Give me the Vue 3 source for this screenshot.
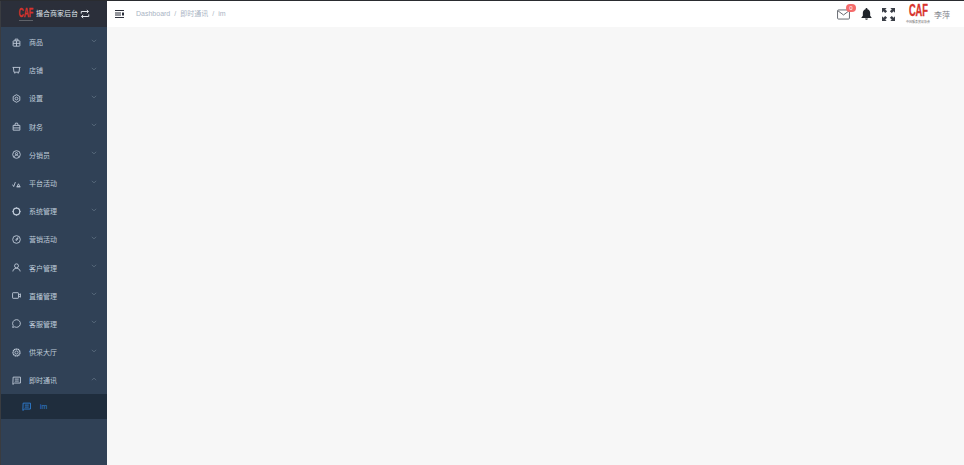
<template>
  <div class="layout">
    <aside class="sidebar">
      <div class="logo-bar">
        <div class="logo-mark">
          <span class="caf">CAF</span>
          <span class="tiny"></span>
        </div>
        <span class="logo-title">撮合商家后台</span>
        <svg class="swap" viewBox="0 0 12 12"><path d="M1.500 5.500V3h8.500M8.200 1.200L10.200 3 8.200 4.800M10.500 6.500V9H2M3.800 7.200L1.800 9l2 1.800" /></svg>
      </div>
      <nav class="menu">
        <div v-for="item in menu" :key="item.name" class="menu-item">
          <svg class="icon" viewBox="0 0 16 16" v-html="icons[item.icon]"></svg>
          <span class="label">{{ item.name }}</span>
          <svg class="arrow" :class="{ up: item.open }" viewBox="0 0 8 5"><path d="M1 1l3 2.600L7 1" /></svg>
        </div>
        <div class="sub-item">
          <svg class="icon" viewBox="0 0 16 16" v-html="icons.chat"></svg>
          <span>im</span>
        </div>
      </nav>
    </aside>
    <main class="main">
      <header class="topbar">
        <svg class="fold" viewBox="0 0 9 8"><path d="M0 .5h9M0 3h6M0 5h6M0 7.500h9" /><path class="solid" d="M7 2.500h2v3H7z" /></svg>
        <div class="crumbs">
          <span>Dashboard</span><i>/</i><span>即时通讯</span><i>/</i><span>im</span>
        </div>
        <div class="tools">
          <div class="mail">
            <svg viewBox="0 0 14 11"><rect x=".6" y=".6" width="12.800" height="9.800" rx="1" /><path d="M1 1.500l6 4.500 6-4.500" /></svg>
            <span class="badge">0</span>
          </div>
          <svg class="bell" viewBox="0 0 12 13"><path d="M6 0a1 1 0 0 1 1 1.200C9 1.700 10 3.400 10 5.500V8.500l1.800 2.300H.2L2 8.500V5.500c0-2.100 1-3.800 3-4.300A1 1 0 0 1 6 0zM4.500 11.300h3a1.500 1.500 0 0 1-3 0z" /></svg>
          <svg class="full" viewBox="0 0 14 14"><path d="M0 0h5L3.500 1.500 5.500 3.500 3.500 5.500 1.500 3.500 0 5zM14 0v5L12.500 3.500 10.500 5.500 8.500 3.500 10.500 1.500 9 0zM0 14V9L1.500 10.500 3.500 8.500 5.500 10.500 3.500 12.500 5 14zM14 14H9L10.500 12.500 8.500 10.500 10.500 8.500 12.500 10.500 14 9z" /></svg>
          <div class="avatar">
            <span class="caf big">CAF</span>
            <span class="tiny wide">中国服务贸易协会</span>
          </div>
          <span class="user">李萍</span>
        </div>
      </header>
      <div class="content"></div>
    </main>
  </div>
</template>

<script setup>
const icons = {
  goods: '<rect x="2" y="5" width="12" height="9.500" rx="1"/><path d="M5.500 5V2h5v3M2 9.500h12M8 5v9.500"/>',
  shop: '<path d="M1 2.500h14M2.500 2.500l1 8.500h9l1-8.500M5 11v2.500M11 11v2.500"/>',
  gear: '<circle cx="8" cy="8" r="2.500"/><path d="M8 1.200l5.900 3.400v6.800L8 14.800l-5.900-3.400V4.600z"/>',
  money: '<path d="M2 6h12v8.500H2zM5 6l1.200-4h3.600L11 6M2 10.500h12"/>',
  globe: '<circle cx="8" cy="8" r="6.800"/><circle cx="8" cy="6.500" r="2"/><path d="M3.500 12.500c1-2.300 2.500-3.500 4.500-3.500s3.500 1.200 4.500 3.500"/>',
  chart: '<path d="M1 10l2 3.500 3-8M9 13.500l2.500-5 2.500 5zM8 14h7"/>',
  sys: '<circle cx="8" cy="8" r="5.800" stroke-width="2.200"/><path d="M8 .5v2M8 13.500v2M.5 8h2M13.500 8h2"/>',
  compass: '<circle cx="8" cy="8" r="6.800"/><path d="M10.800 4.800L9 9 7 9.500 7 7.500z"/>',
  user: '<circle cx="8" cy="5" r="3.500"/><path d="M1.500 15c.5-3.800 3-5.500 6.500-5.500s6 1.700 6.500 5.500"/>',
  video: '<rect x="1" y="3" width="10.500" height="10" rx="1"/><path d="M11.500 7l3.500-2v6l-3.500-2"/>',
  bubble: '<path d="M8 1.200a6.800 6.800 0 1 1-3.300 12.700L1.200 15l.9-3.400A6.800 6.800 0 0 1 8 1.200z"/>',
  supply: '<circle cx="8" cy="8" r="2.800"/><circle cx="8" cy="8" r="6.200" stroke-width="2.200" stroke-dasharray="2.800 .6"/>',
  chat: '<path d="M2 2h13v10.500H4.500L1.500 15zM5 5.500h7M5 9h7"/>',
}

const menu = [
  { name: '商品', icon: 'goods' },
  { name: '店铺', icon: 'shop' },
  { name: '设置', icon: 'gear' },
  { name: '财务', icon: 'money' },
  { name: '分销员', icon: 'globe' },
  { name: '平台活动', icon: 'chart' },
  { name: '系统管理', icon: 'sys' },
  { name: '营销活动', icon: 'compass' },
  { name: '客户管理', icon: 'user' },
  { name: '直播管理', icon: 'video' },
  { name: '客服管理', icon: 'bubble' },
  { name: '供采大厅', icon: 'supply' },
  { name: '即时通讯', icon: 'chat', open: true },
]
</script>

<style>
body {
  margin: 0;
}
</style>

<style scoped>
.layout {
  display: flex;
  width: 964px;
  height: 465px;
  overflow: hidden;
  font-family: "Liberation Sans", "Noto Sans CJK SC", sans-serif;
  border-top: 1px solid #2a2c30;
  box-sizing: border-box;
  background: #f7f7f7;
}

.sidebar {
  width: 107px;
  flex: none;
  background: #304156;
  border-left: 1px solid #3a3c40;
  box-sizing: border-box;
}

.logo-bar {
  height: 26px;
  background: #2b2f3a;
  display: flex;
  align-items: center;
  padding-left: 17px;
}

.logo-mark {
  width: 15px;
  flex: none;
  display: flex;
  flex-direction: column;
  align-items: center;
}

.caf {
  font-weight: 700;
  font-size: 12.500px;
  line-height: 12px;
  color: #d8332c;
  -webkit-text-stroke: .3px #d8332c;
  transform: scaleX(.58);
}

.tiny {
  display: block;
  height: 1.500px;
  width: 14px;
  margin-top: 1px;
  background: #5f6269;
}

.logo-title {
  font-size: 7px;
  line-height: 10px;
  color: #dfe4ea;
  margin-left: 3px;
  white-space: nowrap;
}

.swap {
  width: 10px;
  height: 10px;
  margin-left: 2px;
  fill: none;
  stroke: #e4e7ec;
  stroke-width: 1.200;
}

.menu {
  padding-top: 1px;
}

.menu-item {
  height: 28.200px;
  display: flex;
  align-items: center;
  padding-left: 11px;
  color: #bfcbd9;
  font-size: 7px;
}

.icon {
  width: 9px;
  height: 9px;
  flex: none;
  fill: none;
  stroke: currentColor;
  stroke-width: 1.600;
}

.label {
  margin-left: 8px;
  flex: 1;
}

.arrow {
  width: 6px;
  height: 4px;
  margin: 0 10px 3px 0;
  fill: none;
  stroke: #6d7d90;
  stroke-width: .8;
}

.arrow.up {
  transform: scaleY(-1);
}

.sub-item {
  height: 25px;
  display: flex;
  align-items: center;
  gap: 9px;
  padding-left: 21px;
  background: #1f2d3d;
  color: #2f7fd6;
  font-size: 7px;
}

.main {
  flex: 1;
  display: flex;
  flex-direction: column;
}

.topbar {
  height: 26px;
  background: #fff;
  display: flex;
  align-items: center;
  box-shadow: 0 1px 2px rgba(0, 21, 41, .06);
}

.fold {
  width: 9px;
  height: 8px;
  margin-left: 8px;
  fill: none;
  stroke: #2b2f3a;
  stroke-width: 1;
}

.fold .solid {
  fill: #2b2f3a;
  stroke: none;
}

.crumbs {
  margin-left: 12px;
  font-size: 7px;
  line-height: 10px;
  color: #a9b4c4;
  display: flex;
  align-items: center;
  gap: 4px;
}

.crumbs i {
  font-style: normal;
}

.tools {
  margin-left: auto;
  display: flex;
  align-items: center;
  padding-right: 14px;
}

.mail {
  position: relative;
  width: 13px;
  height: 11px;
}

.mail svg {
  display: block;
  width: 13px;
  height: 11px;
  fill: none;
  stroke: #5c6068;
  stroke-width: 1;
}

.badge {
  position: absolute;
  top: -5px;
  right: -6px;
  width: 10px;
  height: 8px;
  line-height: 8px;
  border-radius: 4px;
  text-align: center;
  background: #f56c6c;
  color: #fff;
  font-size: 6px;
}

.bell {
  width: 11px;
  height: 12px;
  margin-left: 11px;
  fill: #1f2329;
}

.full {
  width: 13px;
  height: 13px;
  margin-left: 10px;
  fill: #3a3e46;
}

.avatar {
  width: 20px;
  margin: 0 0 2px 13px;
  display: flex;
  flex-direction: column;
  align-items: center;
}

.caf.big {
  font-size: 16px;
  line-height: 16px;
  -webkit-text-stroke: .4px #d8332c;
}

.tiny.wide {
  height: auto;
  width: auto;
  margin-top: 2px;
  background: none;
  font-size: 3px;
  line-height: 3px;
  color: #666;
  white-space: nowrap;
}

.user {
  font-size: 8px;
  color: #7c8088;
  margin-left: 6px;
}

.content {
  flex: 1;
  background: #f7f7f7;
}
</style>
